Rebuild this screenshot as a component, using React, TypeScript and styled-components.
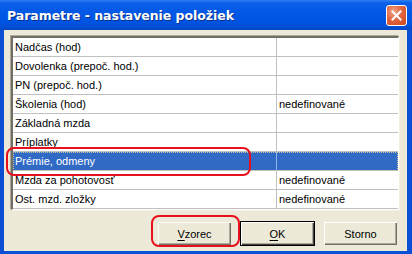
import styled, { createGlobalStyle } from "styled-components";

const GlobalStyle = createGlobalStyle`
  html, body {
    margin: 0;
    padding: 0;
    background: #ffffff;
  }
`;

const rows = [
  { name: "Nadčas (hod)", value: "" },
  { name: "Dovolenka (prepoč. hod.)", value: "" },
  { name: "PN (prepoč. hod.)", value: "" },
  { name: "Školenia (hod)", value: "nedefinované" },
  { name: "Základná mzda", value: "" },
  { name: "Príplatky", value: "" },
  { name: "Prémie, odmeny", value: "" },
  { name: "Mzda za pohotovosť", value: "nedefinované" },
  { name: "Ost. mzd. zložky", value: "nedefinované" },
];

const Window = styled.div`
  position: relative;
  width: 412px;
  height: 254px;
  display: flex;
  flex-direction: column;
  background: #0a4fd4;
  box-sizing: border-box;
  font-family: "Liberation Sans", Arial, sans-serif;
  overflow: hidden;
`;

const TitleBar = styled.div`
  height: 30px;
  flex: none;
  display: flex;
  align-items: center;
  justify-content: space-between;
  padding: 0 5px 0 7px;
  background: linear-gradient(
    to bottom,
    #2f7ff0 0px,
    #0b5fe8 3px,
    #0358e6 12px,
    #0054e3 22px,
    #004fd6 27px,
    #0a47c2 30px
  );
`;

const Title = styled.span`
  color: #ffffff;
  font-family: "DejaVu Sans", Verdana, sans-serif;
  font-weight: bold;
  font-size: 12.5px;
  letter-spacing: -0.05px;
  text-shadow: 1px 1px 0 #0a2f86;
  margin-top: 1px;
`;

const CloseButton = styled.div`
  width: 21px;
  height: 21px;
  box-sizing: border-box;
  border: 1px solid #ffffff;
  border-radius: 3px;
  background: radial-gradient(circle at 35% 30%, #f0a48a 0%, #e2663f 45%, #c9461f 100%);
  display: flex;
  align-items: center;
  justify-content: center;
`;

const Body = styled.div`
  flex: 1;
  margin: 0 5px 4px 4px;
  background: #ece9d8;
  display: flex;
  flex-direction: column;
  padding: 6px 8px 5px 7px;
`;

const Grid = styled.div`
  height: 174px;
  box-sizing: border-box;
  background: #ffffff;
  border-style: solid;
  border-width: 2px 1px 1px 2px;
  border-color: #716f64 #ffffff #ffffff #716f64;
  box-shadow: -1px -1px 0 #aca899, 1px 1px 0 #f1efe2;
  display: flex;
  flex-direction: column;
`;

const Row = styled.div<{ $selected?: boolean }>`
  height: 19px;
  flex: none;
  display: grid;
  grid-template-columns: 264px 1fr;
  border-bottom: 1px solid #c0c0c0;
  box-sizing: border-box;
  background: ${(p) => (p.$selected ? "#316ac5" : "#ffffff")};
  color: ${(p) => (p.$selected ? "#ffffff" : "#000000")};
  outline: ${(p) => (p.$selected ? "1px dotted #c9c9a0" : "none")};
  outline-offset: -1px;
`;

const Cell = styled.div<{ $selected?: boolean; $first?: boolean }>`
  font-size: 11px;
  line-height: 18px;
  padding-left: 2px;
  white-space: nowrap;
  overflow: hidden;
  border-right: ${(p) =>
    p.$first ? `1px solid ${p.$selected ? "#8fb4ee" : "#c0c0c0"}` : "none"};
`;

const ButtonRow = styled.div`
  flex: 1;
  display: flex;
  justify-content: flex-end;
  align-items: flex-start;
  gap: 8px;
  padding-top: 11px;
  padding-right: 1px;
`;

const Button = styled.div<{ $default?: boolean }>`
  width: 75px;
  height: 25px;
  box-sizing: border-box;
  display: flex;
  align-items: center;
  justify-content: center;
  font-size: 11px;
  color: #000000;
  background: #ece9d8;
  border: 1px solid ${(p) => (p.$default ? "#000000" : "#ece9d8")};
  box-shadow: ${(p) =>
    p.$default
      ? "inset 1px 1px 0 #ffffff, inset -1px -1px 0 #404040, inset -2px -2px 0 #aca899"
      : "inset 1px 1px 0 #ffffff, inset -1px -1px 0 #716f64, inset -2px -2px 0 #aca899"};
  u {
    text-decoration: underline;
    text-underline-offset: 2px;
  }
`;

const Annotation = styled.div<{ $x: number; $y: number; $w: number; $h: number }>`
  position: absolute;
  left: ${(p) => p.$x}px;
  top: ${(p) => p.$y}px;
  width: ${(p) => p.$w}px;
  height: ${(p) => p.$h}px;
  box-sizing: border-box;
  border: 2.5px solid #e8101c;
  border-radius: 8px;
  pointer-events: none;
`;

export default function App() {
  return (
    <>
      <GlobalStyle />
      <Window>
        <TitleBar>
          <Title>Parametre - nastavenie položiek</Title>
          <CloseButton>
            <svg width="11" height="11" viewBox="0 0 11 11">
              <path d="M1.5 1.5 L9.5 9.5 M9.5 1.5 L1.5 9.5" stroke="#ffffff" strokeWidth="2" strokeLinecap="square" />
            </svg>
          </CloseButton>
        </TitleBar>
        <Body>
          <Grid>
            {rows.map((r) => {
              const sel = r.name === "Prémie, odmeny";
              return (
                <Row key={r.name} $selected={sel}>
                  <Cell $first $selected={sel}>{r.name}</Cell>
                  <Cell $selected={sel}>{r.value}</Cell>
                </Row>
              );
            })}
          </Grid>
          <ButtonRow>
            <Button>
              <span><u>V</u>zorec</span>
            </Button>
            <Button $default>
              <span><u>O</u>K</span>
            </Button>
            <Button>Storno</Button>
          </ButtonRow>
        </Body>
        <Annotation $x={6} $y={147} $w={245} $h={29} />
        <Annotation $x={151} $y={215} $w={89} $h={32} />
      </Window>
    </>
  );
}
